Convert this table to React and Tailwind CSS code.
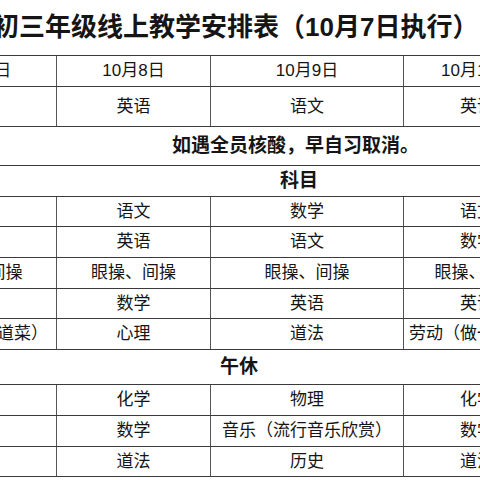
const font = { fontFamily: '"Liberation Sans", "Noto Sans CJK SC", sans-serif' }

const cols = ['w-[152px]', 'w-[154px]', 'w-[193px]', 'w-[147px]']

const rows = [
  { h: 'h-[31px]', cells: ['10月7日', '10月8日', '10月9日', '10月10日'] },
  { h: 'h-[40px]', cells: ['语文', '英语', '语文', '英语'] },
  { h: 'h-[39px]', merged: '如遇全员核酸，早自习取消。', pad: 'pl-[268px]' },
  { h: 'h-[31px]', merged: '科目', pad: 'pl-[376px]' },
  { h: 'h-[30px]', cells: ['英语', '语文', '数学', '语文'] },
  { h: 'h-[31px]', cells: ['数学', '英语', '语文', '数学'] },
  { h: 'h-[31px]', cells: ['眼操、间操', '眼操、间操', '眼操、间操', '眼操、间操'] },
  { h: 'h-[30px]', cells: ['', '数学', '英语', '英语'] },
  { h: 'h-[31px]', cells: ['劳动（做一道菜）', '心理', '道法', '劳动（做一道菜）'] },
  { h: 'h-[35px]', merged: '午休', pad: 'pl-[316px]' },
  { h: 'h-[31px]', cells: ['', '化学', '物理', '化学'] },
  { h: 'h-[31px]', cells: ['', '数学', '音乐（流行音乐欣赏）', '数学'] },
  { h: 'h-[30px]', cells: ['', '道法', '历史', '道法'] },
]

export default function App() {
  return (
    <div className="w-[480px] h-[480px] overflow-hidden bg-white text-[#151515]" style={font}>
      <div className="w-[646px] ml-[-96px]">
        {/* Title */}
        <div className="h-[55px] pt-[14px] pl-[89px] whitespace-nowrap text-[26px] leading-none font-bold">
          初三年级线上教学安排表（10月7日执行）
        </div>

        {/* Table */}
        <div className="border-b border-[#3a3a3a]">
          {rows.map((row, i) => (
            <div key={i} className={`flex border-t border-[#3a3a3a] ${row.h}`}>
              {row.merged ? (
                <div className={`flex-1 flex items-center whitespace-nowrap text-[19px] font-bold ${row.pad}`}>
                  {row.merged}
                </div>
              ) : (
                row.cells.map((c, j) => (
                  <div
                    key={j}
                    className={`${cols[j]} shrink-0 flex items-center justify-center whitespace-nowrap text-[17px] ${j > 0 ? 'border-l border-[#555]' : ''}`}
                  >
                    {c}
                  </div>
                ))
              )}
            </div>
          ))}
        </div>
      </div>
    </div>
  )
}
